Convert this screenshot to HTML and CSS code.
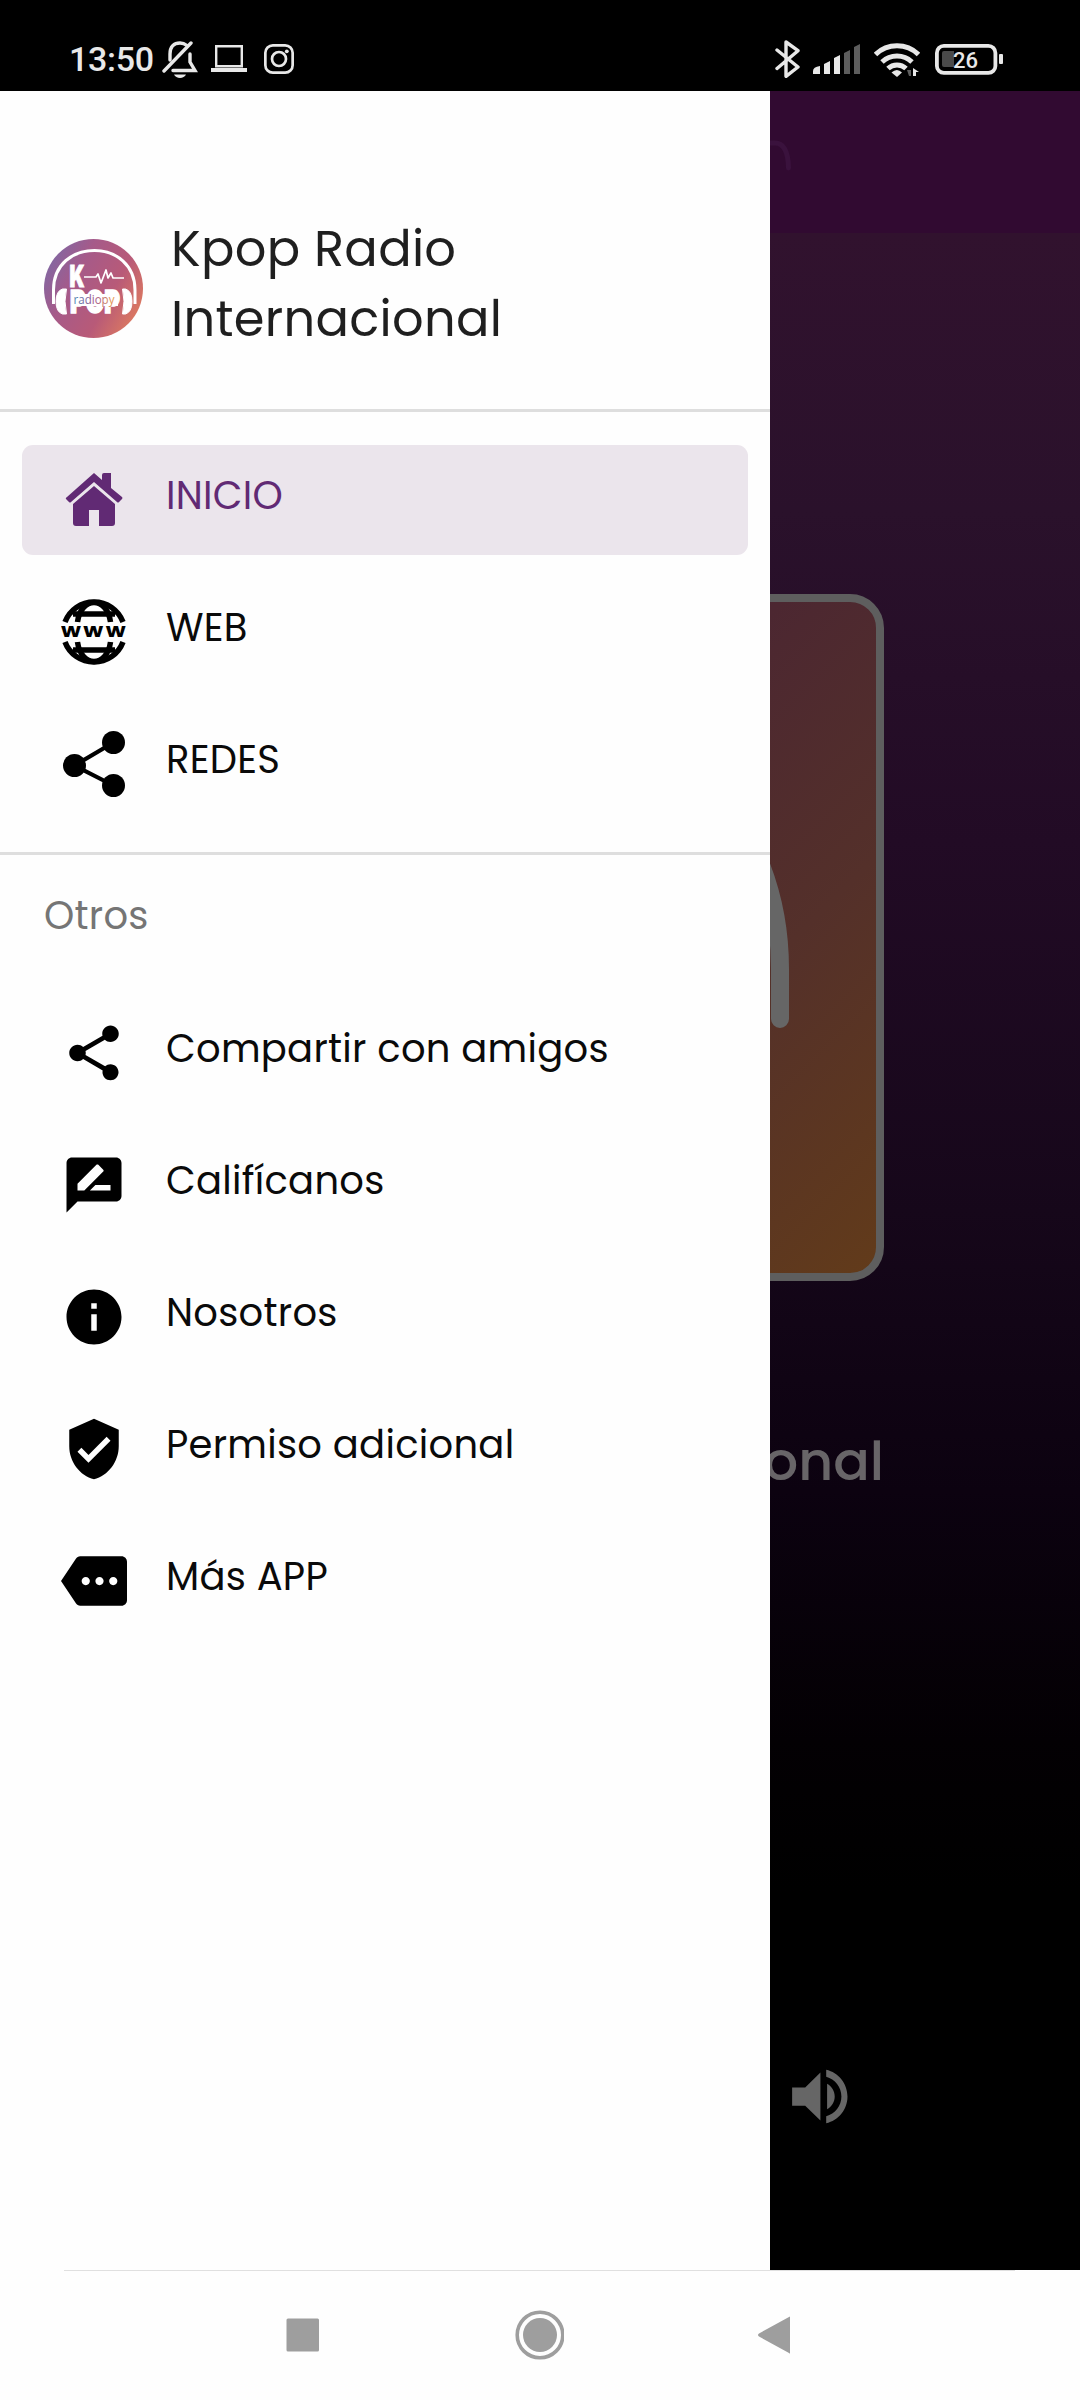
FILE: index.html
```html
<!DOCTYPE html>
<html lang="es">
<head>
<meta charset="utf-8">
<title>Kpop Radio Internacional</title>
<link rel="stylesheet" href="styles.css">
</head>
<body>
<header class="status">
  <div class="status-left">
    <span class="clock">13:50</span>
    <svg class="bell" width="36" height="38" viewBox="0 0 36 38" fill="none" stroke="#e8e8e8" stroke-width="3.400" stroke-linecap="round"><path d="M8 20V14C8 6.500 12 3 18 3c3 0 5 1 7 2.500M28 14v8l5 8.500H11"/><path d="M2 31 29 3"/><path d="M12 34.500h12c-2 4.500-10 4.500-12 0z" fill="#e8e8e8" stroke="none"/></svg>
    <svg class="laptop" width="36" height="28" viewBox="0 0 36 28"><path d="M5.200 1.200h25.600v20H5.200z" fill="none" stroke="#e8e8e8" stroke-width="2.400"/><path d="M0 23h36v4H0z" fill="#e8e8e8"/></svg>
    <svg class="insta" width="30" height="30" viewBox="0 0 30 30" fill="none" stroke="#e8e8e8" stroke-width="2.700"><rect x="1.350" y="1.350" width="27.300" height="27.300" rx="7.500"/><circle cx="15" cy="15" r="7"/><circle cx="22.800" cy="7.300" r="1.900" fill="#e8e8e8" stroke="none"/></svg>
  </div>
  <div class="status-right">
    <svg width="25" height="38" viewBox="0 0 25 38" fill="none" stroke="#e8e8e8" stroke-width="3.400" stroke-linejoin="round" stroke-linecap="round"><path d="M2 10l21 17-12 9.300V2L23 10.700 2 28.500"/></svg>
    <svg class="signal" width="49" height="31" viewBox="0 0 49 31" fill="#e8e8e8"><path d="M0 30v-3q0-4 7-5v8zM11 30V20l6-3v13zM21 30V14l6-3v19z"/><path d="M31 30V9l6-3v24zM41 30V3l6-3v30z" fill="#5d5d5d"/></svg>
    <svg class="wifi" width="46" height="35" viewBox="0 0 46 35" fill="none" stroke="#e8e8e8" stroke-width="5"><path d="M1.500 12.500a31 31 0 0 1 43 0M8 20a22 22 0 0 1 30 0M14 26.500a13 13 0 0 1 18 0"/><path d="M17.500 30.500Q23 25.500 28 30.500L23 35z" fill="#e8e8e8" stroke="none"/><path d="M33 28h4v6h-2z" fill="#5d5d5d" stroke="none"/><path d="M39 34v-8l6 4h-3v4z" fill="#e8e8e8" stroke="none"/></svg>
    <svg class="battery" width="68" height="31" viewBox="0 0 68 31"><rect x="1.900" y="1.900" width="58.500" height="27" rx="7" fill="none" stroke="#e8e8e8" stroke-width="3.800"/><path d="M9 7h10v16H9q-2 0-2-2V9q0-2 2-2z" fill="#4a4a4a"/><rect x="64" y="10" width="4" height="10" rx="1" fill="#e8e8e8"/><text x="18" y="23.500" font-size="22" class="charge">26</text></svg>
  </div>
</header>

<main class="app">
  <section class="player">
    <div class="appbar"><svg width="22" height="40" viewBox="0 0 22 40" fill="none" stroke="#3a123d" stroke-width="5" stroke-linecap="round"><path d="M0 5h5Q18 5 18.500 30"/></svg></div>
    <div class="cover"><svg width="672" height="671" viewBox="0 0 672 671" fill="none" stroke="#666" stroke-width="18" stroke-linecap="round"><path d="M96 417v-50C96 170 200 110 336 110S576 220 576 367v50"/></svg></div>
    <h2 class="station">Kpop Radio Internacional</h2>
    <svg class="volume" width="73" height="73" viewBox="0 0 24 24" fill="#666"><path d="M3 9v6h4.300l5 4.900V4.100L7.300 9zM17 12c0-1.800-1-3.400-2.500-4.200v8.400C16 15.400 17 13.800 17 12zM14.200 3.200v2.300c2.900.8 5 3.400 5 6.500s-2.100 5.700-5 6.500v2.300c4-.9 7-4.500 7-8.800s-3-7.900-7-8.800z"/></svg>
  </section>

  <aside class="drawer">
    <div class="brand">
      <svg width="99" height="99" viewBox="0 0 99 99">
        <defs>
          <linearGradient id="disc" x1="0" y1=".25" x2="1" y2=".8"><stop offset="0" stop-color="#8068a4"/><stop offset=".3" stop-color="#a65a89"/><stop offset=".65" stop-color="#b85a78"/><stop offset="1" stop-color="#e27e5c"/></linearGradient>
          <linearGradient id="word"><stop offset="0" stop-color="#4b86b4"/><stop offset=".5" stop-color="#a0568c"/><stop offset="1" stop-color="#eca04e"/></linearGradient>
        </defs>
        <circle cx="49.500" cy="49.500" r="49.500" fill="url(#disc)"/>
        <path d="M9.500 65V51C9.500 25 29 11.500 50.500 11.500S91 26 91 51v14" fill="none" stroke="#fff" stroke-width="3"/>
        <path d="M22.500 50q-3 12 0 25h-4Q12 73 12 62.500T18.500 50zM78.500 50q3 12 0 25h3Q88 73 88 62.500T81.500 50z" fill="#fff" stroke="#fff"/>
        <text x="25.500" y="48" class="logo-k" textLength="15" lengthAdjust="spacingAndGlyphs">K</text>
        <path d="M40 38h12l2-3 3 9 5-13 2 8 3-5 2 5h11" fill="none" stroke="#fff" stroke-width="1.700" stroke-linejoin="round"/>
        <text x="26" y="74" class="logo-pop" textLength="50" lengthAdjust="spacingAndGlyphs">POP</text>
        <rect x="28" y="55" width="46" height="12" fill="#fff"/>
        <text x="29.500" y="64.500" class="logo-word" textLength="41" lengthAdjust="spacingAndGlyphs">radiopy</text>
      </svg>
      <h1>Kpop Radio<br>Internacional</h1>
    </div>

    <nav class="menu">
      <a class="item active"><svg width="66" height="66" viewBox="0 0 66 66" fill="#612a74"><path d="M6 30 33 6l8 7V8q0-2 2-2h7v15l11 9q1 1 0 2l-3 3q-1 1-2 0L33 15 10 35q-1 1-2 0l-3-3q-1-1 1-2z"/><path d="M33 19 54 37v19q0 3-3 3H38V43H28v16H15q-3 0-3-3V37z"/></svg><span>INICIO</span></a>
      <a class="item"><svg width="66" height="66" viewBox="0 0 66 66"><g fill="none" stroke="#000" stroke-width="5.500"><path d="M4 23A31 31 0 0 1 62 23M4 43A31 31 0 0 0 62 43"/><path d="M16.500 23C20-3 46-3 49.500 23M16.500 43C20 69 46 69 49.500 43"/><path d="M12 15h42M12 51h42"/></g><text x="0" y="38.300" class="www" textLength="67" lengthAdjust="spacingAndGlyphs">www</text></svg><span>WEB</span></a>
      <a class="item"><svg width="66" height="66" viewBox="0 0 66 66"><path d="M52.500 11.500 13.500 34.500 52.500 54.500" fill="none" stroke="#000" stroke-width="4.200"/><circle cx="13.500" cy="34.500" r="11.500"/><circle cx="52.500" cy="11.500" r="11.500"/><circle cx="52.500" cy="54.500" r="11.500"/></svg><span>REDES</span></a>
    </nav>

    <h3 class="others">Otros</h3>
    <nav class="menu more">
      <a class="item"><svg width="66" height="66" viewBox="0 0 24 24"><path d="M18 16.080c-.76 0-1.440.3-1.960.77L8.910 12.700c.05-.23.09-.46.09-.7s-.04-.47-.09-.7l7.050-4.110c.54.5 1.250.81 2.040.81 1.660 0 3-1.340 3-3s-1.340-3-3-3-3 1.340-3 3c0 .24.04.47.09.7L8.040 9.810C7.500 9.310 6.790 9 6 9c-1.660 0-3 1.340-3 3s1.340 3 3 3c.79 0 1.500-.31 2.040-.81l7.120 4.160c-.05.21-.08.43-.08.65 0 1.610 1.310 2.920 2.920 2.920s2.920-1.310 2.920-2.920-1.310-2.920-2.920-2.920z"/></svg><span>Compartir con amigos</span></a>
      <a class="item"><svg width="66" height="66" viewBox="0 0 24 24"><path d="M20 2H4c-1.100 0-1.990.9-1.990 2L2 22l4-4h14c1.100 0 2-.9 2-2V4c0-1.100-.9-2-2-2zM6 14v-2.470l6.880-6.880c.2-.2.51-.2.710 0l1.770 1.770c.2.2.2.51 0 .71L8.470 14H6zm12 0h-7.500l2-2H18v2z"/></svg><span>Califícanos</span></a>
      <a class="item"><svg width="66" height="66" viewBox="0 0 24 24"><path d="M12 2C6.480 2 2 6.480 2 12s4.480 10 10 10 10-4.480 10-10S17.520 2 12 2zm1 15h-2v-6h2v6zm0-8h-2V7h2v2z"/></svg><span>Nosotros</span></a>
      <a class="item"><svg width="66" height="66" viewBox="0 0 24 24"><path d="M12 1L3 5v6c0 5.550 3.840 10.740 9 12 5.160-1.260 9-6.450 9-12V5l-9-4zm-2 16l-4-4 1.410-1.410L10 14.170l6.590-6.590L18 9l-8 8z"/></svg><span>Permiso adicional</span></a>
      <a class="item"><svg width="66" height="66" viewBox="0 0 24 24"><path d="M22 3H7c-.69 0-1.230.35-1.590.88L0 12l5.410 8.110c.36.53.9.89 1.590.89h15c1.100 0 2-.9 2-2V5c0-1.100-.9-2-2-2zM9 13.500c-.83 0-1.500-.67-1.500-1.500s.67-1.500 1.500-1.500 1.500.67 1.500 1.500-.67 1.500-1.500 1.500zm5 0c-.83 0-1.500-.67-1.500-1.500s.67-1.500 1.500-1.500 1.500.67 1.500 1.500-.67 1.500-1.500 1.500zm5 0c-.83 0-1.500-.67-1.500-1.500s.67-1.500 1.500-1.500 1.500.67 1.500 1.500-.67 1.500-1.500 1.500z"/></svg><span>Más APP</span></a>
    </nav>
  </aside>
</main>

<footer class="sysnav">
  <svg width="34" height="34" viewBox="0 0 34 34"><rect x=".5" y=".5" width="32.500" height="33" rx="1.500" fill="#9e9e9e"/></svg>
  <svg width="50" height="50" viewBox="0 0 50 50"><circle cx="26" cy="25" r="22.800" fill="none" stroke="#9e9e9e" stroke-width="3.600"/><circle cx="26" cy="25" r="17" fill="#9e9e9e"/></svg>
  <svg width="34" height="40" viewBox="0 0 34 40"><path d="M33 2v36q0 1-1 0L2 21.500q-2-1.500 0-3L32 2q1-1 1 0z" fill="#9e9e9e"/></svg>
</footer>
</body>
</html>
```

FILE: styles.css
```css
* { box-sizing: border-box; }

body {
  margin: 0;
  width: 1080px;
  height: 2400px;
  overflow: hidden;
  background: #fefefe;
  font-family: Poppins, Inter, sans-serif;
  display: flex;
  flex-direction: column;
}

svg { display: block; flex: none; }
h1, h2, h3 { margin: 0; font-weight: 400; }

/* Status bar */
.status {
  height: 91px;
  flex: none;
  background: #000;
  color: #e8e8e8;
  display: flex;
  justify-content: space-between;
  padding: 28px 77px 0 69px;
}
.status-left, .status-right { display: flex; align-items: center; height: 62px; }
.clock { font: 500 34px/40px Roboto, sans-serif; width: 93px; letter-spacing: -0.3px; }
.laptop { margin-left: 13px; }
.insta { margin-left: 17px; }
.signal { margin-left: 13px; }
.wifi { margin-left: 12px; }
.battery { margin-left: 15px; }
.charge { font-family: Roboto, sans-serif; font-weight: 500; fill: #e8e8e8; }

/* Dimmed player screen */
.app { position: relative; height: 2179px; flex: none; }
.player {
  height: 100%;
  overflow: hidden;
  background: linear-gradient(#31122e 142px, #2a112b 420px, #220b25 750px, #16071a 1120px, #0c0210 1400px, #030003 1650px, #000 1800px);
}
.appbar { height: 142px; background: #310a31; padding: 47px 0 0 770px; }
.cover {
  width: 688px;
  height: 687px;
  margin: 361px 0 0 196px;
  border: 8px solid #5e5e5e;
  border-radius: 34px;
  background: linear-gradient(135deg, #33264a, #4c2731 43%, #54302a 69%, #623b1a);
}
.station {
  width: 688px;
  margin: 140px 0 0 196px;
  text-align: right;
  white-space: nowrap;
  font-weight: 500;
  font-size: 54px;
  line-height: 80px;
  color: #686568;
}
.volume { margin: 559px 0 0 783px; }

/* Navigation drawer */
.drawer {
  position: absolute;
  left: 0;
  top: 0;
  width: 770px;
  height: 2179px;
  background: #fefefe;
  color: #0a0a0a;
}
.brand {
  height: 321px;
  border-bottom: 3px solid #dedede;
  display: flex;
  gap: 28px;
  padding: 123px 0 0 44px;
}
.brand svg { margin-top: 25px; }
.brand h1 { font-size: 49.5px; line-height: 70px; color: #1f1f1f; letter-spacing: 0.3px; }
.menu {
  height: 443px;
  padding: 33px 22px 0;
  border-bottom: 3px solid #dedede;
  display: flex;
  flex-direction: column;
  gap: 22px;
}
.item {
  height: 110px;
  flex: none;
  border-radius: 11px;
  display: flex;
  align-items: center;
  gap: 39px;
  padding-left: 39px;
  font-size: 38.5px;
  letter-spacing: 0.27px;
}
.item span { line-height: 50px; margin-top: -9px; white-space: nowrap; }
.active { background: #ebe5ec; color: #612a74; }
.others {
  padding: 33px 0 0 44px;
  height: 110px;
  font-size: 38.5px;
  letter-spacing: 0.27px;
  line-height: 56px;
  color: #757575;
}
.more { height: auto; border: 0; }

.logo-k { font: 900 30px Inter, sans-serif; fill: #fff; stroke: #fff; letter-spacing: 0; }
.logo-pop { font: 900 32px Inter, sans-serif; fill: #fff; stroke: #fff; stroke-width: 1.5; }
.logo-word { font: 500 12px "Open Sans", sans-serif; fill: url(#word); }
.www { font: 700 19px Poppins, Inter, sans-serif; letter-spacing: 2px; fill: #000; }

/* System navigation */
.sysnav {
  flex: 1;
  display: flex;
  justify-content: space-between;
  align-items: center;
  padding: 0 289px 0 286px;
  background: linear-gradient(#e0e0e0, #e0e0e0) 64px 0 / 951px 1px no-repeat #fefefe;
}
```
